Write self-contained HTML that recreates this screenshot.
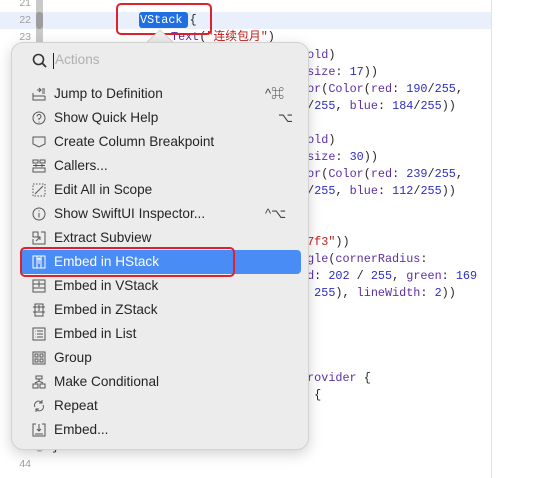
<!DOCTYPE html>
<html><head><meta charset="utf-8"><style>
body{margin:0;width:558px;height:478px;background:#fff;position:relative;overflow:hidden;font-family:"Liberation Sans","Noto Sans CJK SC",sans-serif}
.ab{position:absolute}
.code{position:absolute;font-family:"Liberation Mono","Noto Sans CJK SC",monospace;font-size:11.8px;line-height:17px;white-space:pre;color:#262626}
.p{color:#5d2fa3}.n{color:#2f2ec2}.s{color:#c41a16}
.ln{position:absolute;left:0;width:31px;text-align:right;font-size:10.5px;color:#a0a0a0;font-family:"Liberation Sans",sans-serif}
.menu{position:absolute;left:11px;top:42px;width:296px;height:406px;background:#ececec;border:1px solid #d2d2d2;border-radius:12px;box-shadow:0 4px 14px rgba(0,0,0,.18)}
.it{position:absolute;left:0;width:296px;height:24px;font-size:13.6px;color:#252525;line-height:24px}
.it .t{position:absolute;left:42px}
.it .k{position:absolute;left:253px;color:#444;font-size:13px}
.it svg{position:absolute;left:20px;top:5px}
</style></head><body>
<div class="ab" style="left:0;top:12px;width:491px;height:17px;background:#e9f0fb"></div>
<div class="ab" style="left:491px;top:0;width:1px;height:478px;background:#e3e3e3"></div>
<div class="ab" style="left:36px;top:0;width:7px;height:452px;background:#c9c9c9;border-radius:0 0 4px 4px"></div>
<div class="ab" style="left:36px;top:12px;width:7px;height:17px;background:#9d9d9d;border-radius:3px"></div>
<div class="ln" style="top:-3px">21</div>
<div class="ln" style="top:14px">22</div>
<div class="ln" style="top:31px">23</div>
<div class="ln" style="top:441px">43</div>
<div class="ln" style="top:458px">44</div>
<div class="ab" style="left:139px;top:12px;width:49px;height:16px;background:#1f6fe0;border-radius:3px"></div>
<div class="code" style="left:140px;top:12px"><span style="color:#fff">VStack</span> {</div>
<div class="code" style="left:171px;top:29px"><span class="p">Text</span>(<span class="s">"连续包月"</span>)</div>
<div class="code" style="left:52px;top:439px">}</div>
<div class="code" style="left:300px;top:47px"><span class="p">bold</span>)
<span class="p">(size</span>: <span class="n">17</span>))
<span class="p">lor</span>(<span class="p">Color</span>(<span class="p">red</span>: <span class="n">190</span>/<span class="n">255</span>,
<span class="n">5</span>/<span class="n">255</span>, <span class="p">blue</span>: <span class="n">184</span>/<span class="n">255</span>))

<span class="p">bold</span>)
<span class="p">(size</span>: <span class="n">30</span>))
<span class="p">lor</span>(<span class="p">Color</span>(<span class="p">red</span>: <span class="n">239</span>/<span class="n">255</span>,
<span class="n">5</span>/<span class="n">255</span>, <span class="p">blue</span>: <span class="n">112</span>/<span class="n">255</span>))


<span class="s">f7f3"</span>))
<span class="p">ngle</span>(<span class="p">cornerRadius</span>:
<span class="p">ed</span>: <span class="n">202</span> / <span class="n">255</span>, <span class="p">green</span>: <span class="n">169</span>
/ <span class="n">255</span>), <span class="p">lineWidth</span>: <span class="n">2</span>))




<span class="p">Provider</span> {
  {</div>
<div class="ab" style="left:116px;top:3px;width:92px;height:28px;border:2.5px solid #e0212b;border-radius:5px"></div>
<svg class="ab" style="left:146px;top:28px" width="28" height="16"><path d="M0 15 L14 2 L28 15" fill="#ececec" stroke="#d2d2d2"/></svg>
<div class="menu">
<svg class="ab" style="left:20px;top:10px" width="16" height="16"><circle cx="6.5" cy="6.5" r="5" fill="none" stroke="#333" stroke-width="1.6"/><path d="M10 10 L14 14" stroke="#333" stroke-width="1.8"/></svg>
<div class="ab" style="left:41px;top:10px;width:1px;height:16px;background:#222"></div>
<div class="ab" style="left:43px;top:9px;font-size:13.6px;color:#b0b0b0">Actions</div>
<div class="it" style="top:39px"><svg width="14" height="14" fill="none" stroke="#555"><path d="M1 6v7h12v-4M1 9h12M5 3h4M7 1l2 2-2 2M10 2h3M10 4h3M10 6h3"/></svg><span class="t">Jump to Definition</span><span class="k">^⌘</span></div>
<div class="it" style="top:63px"><svg width="14" height="14" fill="none" stroke="#555"><circle cx="7" cy="7" r="6"/><path d="M5 5.5a2 2 0 1 1 2 2v1.5M7 10.5v1"/></svg><span class="t">Show Quick Help</span><span class="k" style="left:266px">⌥</span></div>
<div class="it" style="top:87px"><svg width="14" height="14" fill="none" stroke="#555"><path d="M1 2h12v7l-6 3-6-3z"/></svg><span class="t">Create Column Breakpoint</span></div>
<div class="it" style="top:111px"><svg width="14" height="14" fill="none" stroke="#555"><path d="M1 1h5v3H1zM8 1h5v3H8zM1 9h12v4H1zM4 8V5M10 8V5M1 6.5h12"/></svg><span class="t">Callers...</span></div>
<div class="it" style="top:135px"><svg width="14" height="14" fill="none" stroke="#555" stroke-dasharray="1.5 1.5"><rect x="1" y="1" width="12" height="12"/><path d="M3 11L11 3" stroke-dasharray="none"/></svg><span class="t">Edit All in Scope</span></div>
<div class="it" style="top:159px"><svg width="14" height="14" fill="none" stroke="#555"><circle cx="7" cy="7" r="6"/><path d="M7 6v4.5M7 3.5v1"/></svg><span class="t">Show SwiftUI Inspector...</span><span class="k">^⌥</span></div>
<div class="it" style="top:183px"><svg width="14" height="14" fill="none" stroke="#555"><path d="M1 1h5v5H1zM1 8v5h12V1H9M4 10l4-4M8 9V6H5"/></svg><span class="t">Extract Subview</span></div>
<div class="it" style="top:207px;left:8px;width:281px;background:#4a8cf5;border-radius:4px;color:#fff"><svg width="14" height="14" fill="none" stroke="#fff" style="left:12px"><rect x="1" y="1" width="12" height="12"/><path d="M5 1v12M9 1v12M7 3v6M5 5l2-2 2 2"/></svg><span class="t" style="left:34px">Embed in HStack</span></div>
<div class="it" style="top:231px"><svg width="14" height="14" fill="none" stroke="#555"><rect x="1" y="1" width="12" height="12"/><path d="M1 5h12M1 9h12M7 2v6"/></svg><span class="t">Embed in VStack</span></div>
<div class="it" style="top:255px"><svg width="14" height="14" fill="none" stroke="#555"><path d="M3 1h8v12H3zM1 4h12M1 9h12M7 2v6"/></svg><span class="t">Embed in ZStack</span></div>
<div class="it" style="top:279px"><svg width="14" height="14" fill="none" stroke="#555"><rect x="1" y="1" width="12" height="12"/><path d="M5 4h6M5 7h6M5 10h6M3 4h0.5M3 7h.5M3 10h.5"/></svg><span class="t">Embed in List</span></div>
<div class="it" style="top:303px"><svg width="14" height="14" fill="none" stroke="#555"><rect x="1" y="1" width="12" height="12"/><path d="M3 3h3v3H3zM8 3h3v3H8zM3 8h3v3H3zM8 8h3v3H8z"/></svg><span class="t">Group</span></div>
<div class="it" style="top:327px"><svg width="14" height="14" fill="none" stroke="#555"><path d="M4 1h6v3H4zM1 9h5v4H1zM8 9h5v4H8zM7 4v2M3 8l4-2 4 2"/></svg><span class="t">Make Conditional</span></div>
<div class="it" style="top:351px"><svg width="14" height="14" fill="none" stroke="#555"><path d="M3 8a4 4 0 0 1 6-5l1 1M11 6a4 4 0 0 1-6 5l-1-1M10 1v3H7M4 13v-3h3"/></svg><span class="t">Repeat</span></div>
<div class="it" style="top:375px"><svg width="14" height="14" fill="none" stroke="#555"><path d="M4 1H1v12h12V1h-3M7 1v7M5 6l2 2 2-2M3 11h8" /></svg><span class="t">Embed...</span></div>
</div>
<div class="ab" style="left:20px;top:247px;width:211px;height:26px;border:2.5px solid #e0212b;border-radius:5px"></div>
</body></html>
